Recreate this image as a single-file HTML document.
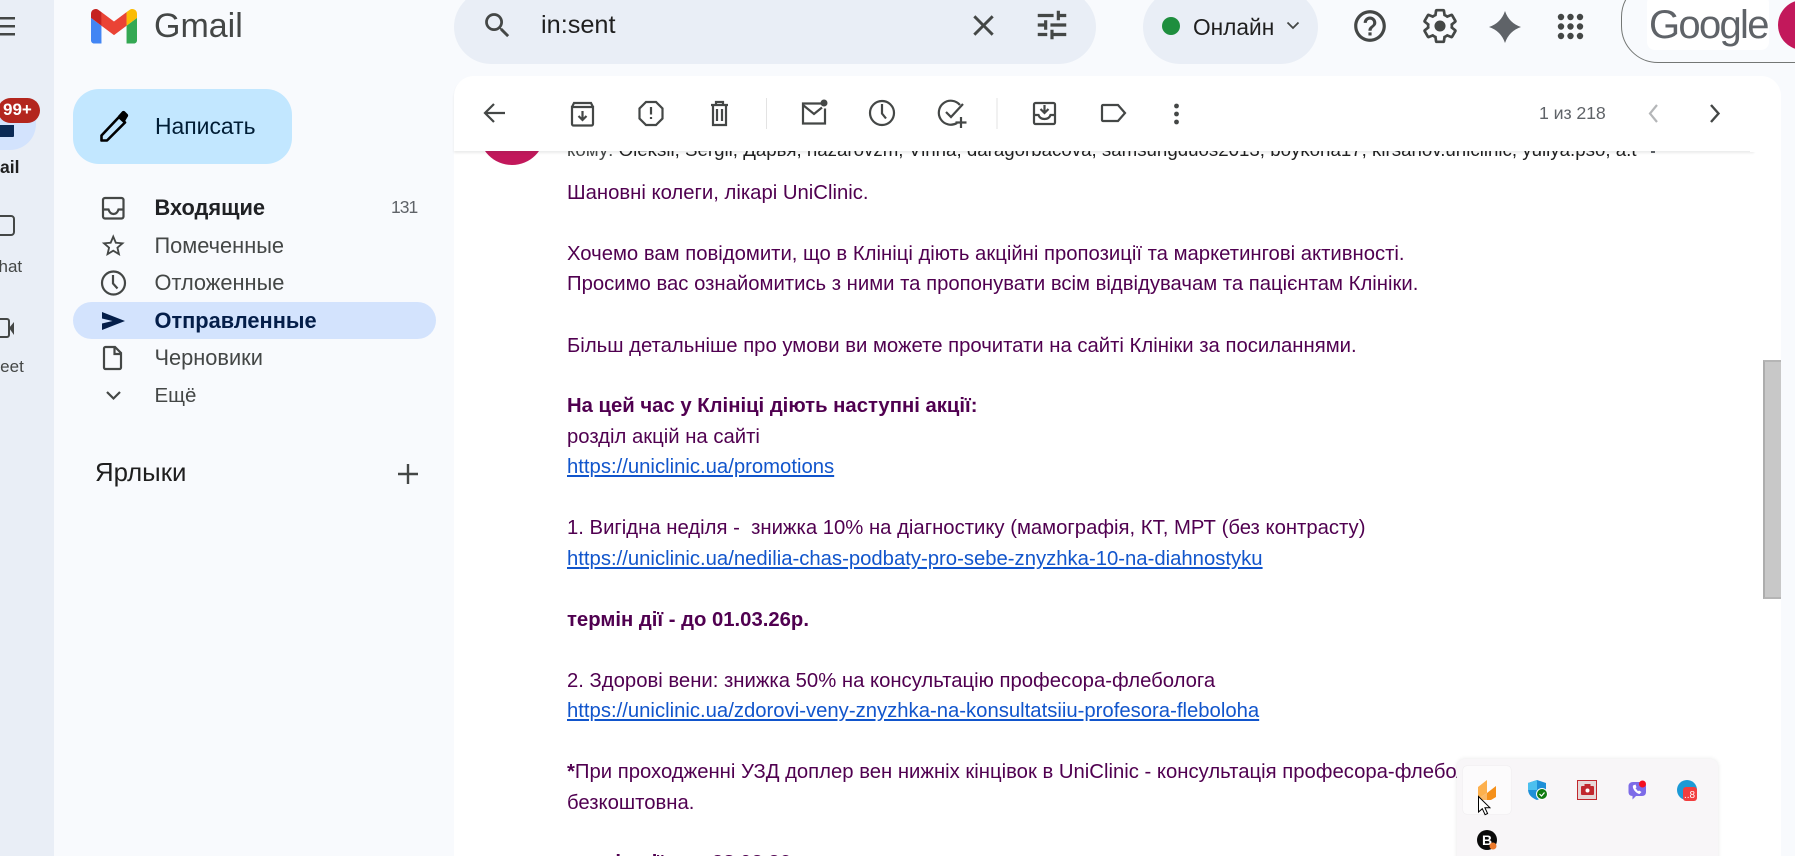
<!DOCTYPE html>
<html lang="uk"><head><meta charset="utf-8"><title>Gmail</title>
<style>
html,body{margin:0;padding:0;width:1795px;height:856px;overflow:hidden;background:#f8fafd}
body{position:relative;font-family:"Liberation Sans",Arial,sans-serif}
.a{position:absolute}
.t{position:absolute;white-space:nowrap;line-height:30px;height:30px}
svg{position:absolute;overflow:visible}
.n{font-size:21.8px;color:#444746;left:154.5px}
.l{position:absolute;left:567px;white-space:nowrap;font-size:20.3px;line-height:30px;height:30px;color:#500050}
.l a{color:#1155cc;text-decoration:underline}
b{font-weight:700}
.i{width:27.5px;height:27.5px;fill:#444746}
.s{fill:none;stroke:#444746;stroke-width:2.2}
</style></head><body>

<!-- left rail -->
<div class="a" style="left:0;top:0;width:54px;height:856px;background:#e9eef6"></div>
<svg style="left:0;top:0" width="54" height="400">
<g fill="#444746"><rect x="0" y="17" width="15" height="2.5"/><rect x="0" y="25" width="15" height="2.5"/><rect x="0" y="33" width="15" height="2.5"/></g>
<path d="M0 110h36v14a26 26 0 0 1-26 26H0z" fill="#d3e3fd"/>
<path d="M0 125h14v11a1 1 0 0 1-1 1H0z" fill="#0b2a55"/>
<path d="M0 216h11a3 3 0 0 1 3 3v13a3 3 0 0 1-3 3H0" fill="none" stroke="#444746" stroke-width="2"/>
<path d="M0 319h7a2 2 0 0 1 2 2v14a2 2 0 0 1-2 2H0" fill="none" stroke="#444746" stroke-width="2"/>
<path d="M9 328l5-6v13z" fill="#444746"/>
</svg>
<div class="a" style="left:-2px;top:98px;width:42px;height:25px;border-radius:13px;background:#b3261e"></div>
<div class="t" style="left:3px;top:95px;font-size:17px;font-weight:700;color:#fff">99+</div>
<div class="t" style="left:0;top:152px;font-size:17.5px;color:#1f1f1f;font-weight:700">ail</div>
<div class="t" style="left:-10px;top:252px;font-size:17px;color:#444746">chat</div>
<div class="t" style="left:-14px;top:352px;font-size:17px;color:#444746">Meet</div>

<!-- logo -->
<svg style="left:91px;top:9px" width="46" height="34.5" viewBox="52 42 88 66">
<path fill="#4285f4" d="M58 108h14V74L52 59v43c0 3.32 2.69 6 6 6"/>
<path fill="#34a853" d="M120 108h14c3.32 0 6-2.69 6-6V59l-20 15"/>
<path fill="#fbbc04" d="M120 48v26l20-15v-8c0-7.42-8.47-11.65-14.4-7.2"/>
<path fill="#ea4335" d="M72 74V48l24 18 24-18v26L96 92"/>
<path fill="#c5221f" d="M52 51v8l20 15V48l-5.6-4.2c-5.94-4.45-14.4-.22-14.4 7.2"/>
</svg>
<div class="t" style="left:154px;top:11px;font-size:34px;color:#444746">Gmail</div>

<!-- compose -->
<div class="a" style="left:73px;top:89px;width:219px;height:75px;border-radius:26px;background:#c2e7ff"></div>
<svg style="left:99px;top:110px" width="31" height="32" viewBox="0 0 31 32">
<path d="M2.500 25.500L20 7 26 12.500 8 30.500H2.500z" fill="none" stroke="#000" stroke-width="2.600" stroke-linejoin="round"/>
<path d="M19 6l4-4.500a2 2 0 0 1 3 0l2.500 2.500a2 2 0 0 1 0 3L25 13z" fill="#000"/>
</svg>
<div class="t" style="left:155px;top:110.500px;font-size:22.9px;color:#001d35">Написать</div>

<!-- nav -->
<div class="a" style="left:73px;top:302px;width:363px;height:37px;border-radius:19px;background:#d3e3fd"></div>
<div class="t n" style="top:193px;font-weight:700;color:#202124">Входящие</div>
<div class="t" style="left:391px;top:192px;font-size:17.5px;letter-spacing:-1px;color:#5f6368">131</div>
<div class="t n" style="top:231px">Помеченные</div>
<div class="t n" style="top:268px">Отложенные</div>
<div class="t n" style="top:306px;font-weight:700;color:#041e49">Отправленные</div>
<div class="t n" style="top:343px">Черновики</div>
<div class="t n" style="top:381px;font-size:20.5px">Ещё</div>
<svg style="left:0;top:0" width="160" height="420">
<rect x="103" y="198" width="20.500" height="20.500" rx="2" class="s"/>
<path d="M103 209.500h5.500c1 3 3 4.500 5 4.500s4-1.500 5-4.500h5" class="s"/>
<path transform="translate(99.500 232) scale(1.145)" fill="#444746" d="M22 9.24l-7.19-.62L12 2 9.19 8.630 2 9.240l5.460 4.730L5.820 21 12 17.270 18.180 21l-1.630-7.030L22 9.240zM12 15.400l-3.760 2.270 1-4.280-3.320-2.880 4.380-.38L12 6.100l1.710 4.040 4.380.38-3.320 2.880 1 4.280L12 15.400z"/>
<circle cx="113.500" cy="283" r="11.500" class="s"/><path d="M113 275v8.500l4.500 5" class="s"/>
<path d="M102 312l23 9-23 9v-6.500l10.500-2.500-10.500-2.500z" fill="#041e49"/>
<path d="M105.500 347h9.500l6 6v14.500a1.500 1.500 0 0 1-1.500 1.500h-14a1.500 1.500 0 0 1-1.500-1.500v-19a1.500 1.500 0 0 1 1.500-1.500zM114.500 347v7h6.500" class="s"/>
<path d="M107 392l6.500 6.500 6.500-6.500" class="s"/>
</svg>
<div class="t" style="left:95px;top:458px;font-size:25.800px;color:#1f1f1f">Ярлыки</div>
<svg style="left:396px;top:461px" width="24" height="24"><path d="M12 3v20M2 13h20" stroke="#444746" stroke-width="2.400" fill="none"/></svg>

<!-- search -->
<div class="a" style="left:454px;top:-10px;width:642px;height:74px;border-radius:37px;background:#e9eef6"></div>
<svg class="i" viewBox="0 0 24 24" style="left:481px;top:9px;width:33px;height:33px"><path d="M15.500 14h-.79l-.28-.27A6.471 6.471 0 0 0 16 9.500 6.500 6.500 0 1 0 9.500 16c1.610 0 3.090-.59 4.230-1.570l.27.28v.79l5 4.990L20.490 19l-4.990-5zm-6 0C7.010 14 5 11.990 5 9.500S7.010 5 9.500 5 14 7.010 14 9.500 11.990 14 9.500 14z"/></svg>
<div class="t" style="left:541px;top:10px;font-size:25.300px;color:#1f1f1f">in:sent</div>
<svg class="i" viewBox="0 0 24 24" style="left:966px;top:8px;width:35px;height:35px"><path d="M19 6.410L17.590 5 12 10.590 6.410 5 5 6.410 10.590 12 5 17.590 6.410 19 12 13.410 17.590 19 19 17.590 13.410 12z"/></svg>
<svg class="i" viewBox="0 0 24 24" style="left:1033px;top:6px;width:38px;height:38px"><path d="M3 17v2h6v-2H3zM3 5v2h10V5H3zm10 16v-2h8v-2h-8v-2h-2v6h2zM7 9v2H3v2h4v2h2V9H7zm14 4v-2H11v2h10zm-6-4h2V7h4V5h-4V3h-2v6z"/></svg>

<!-- status -->
<div class="a" style="left:1143px;top:-10px;width:175px;height:74px;border-radius:37px;background:#e9eef6"></div>
<div class="a" style="left:1162px;top:17px;width:18px;height:18px;border-radius:50%;background:#1e8e3e"></div>
<div class="t" style="left:1193px;top:12px;font-size:22.700px;color:#1f1f1f">Онлайн</div>
<svg style="left:1286px;top:21px" width="14" height="10"><path d="M1.500 1.500l5.500 5.500 5.500-5.500" fill="none" stroke="#444746" stroke-width="1.800"/></svg>

<!-- top icons -->
<svg class="i" viewBox="0 0 24 24" style="left:1351px;top:7px;width:38px;height:38px"><path d="M11 18h2v-2h-2v2zm1-16C6.480 2 2 6.480 2 12s4.480 10 10 10 10-4.480 10-10S17.520 2 12 2zm0 18c-4.410 0-8-3.590-8-8s3.590-8 8-8 8 3.590 8 8-3.590 8-8 8zm0-14c-2.210 0-4 1.790-4 4h2c0-1.100.9-2 2-2s2 .9 2 2c0 2-3 1.750-3 5h2c0-2.250 3-2.500 3-5 0-2.210-1.790-4-4-4z"/></svg>
<svg viewBox="0 0 24 24" style="left:1421px;top:7px;width:38px;height:38px"><path fill="none" stroke="#444746" stroke-width="1.700" d="M19.430 12.980c.04-.32.07-.64.07-.98s-.03-.66-.07-.98l2.110-1.650c.19-.15.24-.42.12-.64l-2-3.460c-.12-.22-.39-.3-.61-.22l-2.490 1c-.52-.4-1.080-.73-1.690-.98l-.38-2.650C14.460 2.180 14.250 2 14 2h-4c-.25 0-.46.18-.49.42l-.38 2.650c-.61.25-1.170.59-1.690.98l-2.490-1c-.23-.09-.49 0-.61.22l-2 3.460c-.13.22-.07.49.12.64l2.110 1.650c-.04.32-.07.65-.07.98s.03.66.07.98l-2.110 1.650c-.19.15-.24.42-.12.64l2 3.460c.12.22.39.3.61.22l2.490-1c.52.4 1.080.73 1.690.98l.38 2.650c.03.24.24.42.49.42h4c.25 0 .46-.18.49-.42l.38-2.650c.61-.25 1.170-.59 1.690-.98l2.490 1c.23.09.49 0 .61-.22l2-3.460c.12-.22.07-.49-.12-.64l-2.110-1.650z"/><circle cx="12" cy="12" r="3.500" fill="#444746"/></svg>
<svg viewBox="0 0 24 24" style="left:1489px;top:11px;width:32px;height:32px"><path fill="#5f6368" d="M12 0Q15 9 24 12Q15 15 12 24Q9 15 0 12Q9 9 12 0z"/></svg>
<svg style="left:1557px;top:13px" width="27" height="27"><g fill="#444746"><circle cx="4" cy="4" r="3.200"/><circle cx="13.500" cy="4" r="3.200"/><circle cx="23" cy="4" r="3.200"/><circle cx="4" cy="13.500" r="3.200"/><circle cx="13.500" cy="13.500" r="3.200"/><circle cx="23" cy="13.500" r="3.200"/><circle cx="4" cy="23" r="3.200"/><circle cx="13.500" cy="23" r="3.200"/><circle cx="23" cy="23" r="3.200"/></g></svg>

<!-- account -->
<div class="a" style="left:1621px;top:-20px;width:240px;height:83px;border-radius:37px;border:1px solid #747775;box-sizing:border-box"></div>
<div class="a" style="left:1647px;top:-5px;width:122px;height:55px;border-radius:8px;background:#fff"></div>
<div class="t" style="left:1649px;top:10px;font-size:40px;color:#5f6368;letter-spacing:-1.700px">Google</div>
<div class="a" style="left:1778px;top:0;width:50px;height:50px;border-radius:50%;background:#c2185b"></div>

<!-- card -->
<div class="a" style="left:454px;top:76px;width:1327px;height:800px;border-radius:20px;background:#fff"></div>

<!-- header fragment under toolbar -->
<div class="a" style="left:479px;top:99px;width:66px;height:66px;border-radius:50%;background:#c2185b"></div>
<div class="t" style="left:567px;top:135px;font-size:18.700px;color:#444746">кому: <span style="color:#1f1f1f">Oleksii, Sergii, Дарья, nazarovzm, Vlnna, daragorbacova, samsungduos2013, boykona17, kirsanov.uniclinic, yuliya.pso, a.t</span></div>
<div class="a" style="left:1651px;top:150px;width:4px;height:3px;background:#5f6368"></div>

<!-- toolbar -->
<div class="a" style="left:454px;top:76px;width:1300px;height:75px;background:#fff;border-radius:20px 0 0 0;box-shadow:0 2px 2px rgba(60,64,67,.1)"></div>
<div class="a" style="left:1750px;top:76px;width:31px;height:76px;background:#fff;border-radius:0 20px 0 0"></div>
<svg style="left:0;top:0" width="1795" height="160" fill="none" stroke="#444746" stroke-width="2.200">
<path d="M505 113h-19M494 104l-9 9 9 9"/>
<path d="M572 107h21v17a1.500 1.500 0 0 1-1.500 1.500h-18a1.500 1.500 0 0 1-1.500-1.500zM572 107l2-4h17l2 4" />
<path d="M582.500 111v8M578.500 116l4 4 4-4"/>
<path d="M646 102h10l6.500 6.500v10l-6.500 6.500h-10l-6.500-6.500v-10z"/><path d="M651 107v7.500M651 117v2"/>
<path d="M711 105h17M716 104v-2h7v2M713 105v20h13v-20M717 109v12M722 109v12"/>
<path d="M766.500 98v31" stroke="#e3e3e3" stroke-width="1"/>
<path d="M821 103.500h-18v20h22v-15"/><path d="M803 105l11 9 8-6.500"/><circle cx="824" cy="103" r="3.500" fill="#444746" stroke="none"/>
<circle cx="882" cy="113" r="12"/><path d="M882 104v9.500l4 5"/>
<path d="M960 105a12 12 0 1 0-3 18M946 112l5 5 12-13M961 117v11M955.500 122.500h11"/>
<path d="M997 98v31" stroke="#e3e3e3" stroke-width="1"/>
<rect x="1034" y="103" width="21" height="21" rx="1.500"/><path d="M1034 115h4.500c1 3 3.500 4 6 4s5-1 6-4h4.500M1044.500 105v7M1040.500 109l4 4 4-4"/>
<path d="M1103 105h15l7 8-7 8h-15a1 1 0 0 1-1-1v-14a1 1 0 0 1 1-1z"/>
<path d="M1657 105l-7 8.500 7 8.500" stroke="#b4b6b8"/>
<path d="M1711 105l7.500 8.500-7.500 8.500" stroke-width="2.400"/>
</svg>
<svg style="left:1172px;top:103px" width="9" height="24"><g fill="#444746"><circle cx="4.500" cy="3" r="2.400"/><circle cx="4.500" cy="11" r="2.400"/><circle cx="4.500" cy="19" r="2.400"/></g></svg>
<div class="t" style="left:1539px;top:98px;font-size:17.800px;color:#5f6368;letter-spacing:-.1px">1 из 218</div>

<!-- body -->
<div class="l" style="top:178px">Шановні колеги, лікарі UniClinic.</div>
<div class="l" style="top:239px">Хочемо вам повідомити, що в Клініці діють акційні пропозиції та маркетингові активності.</div>
<div class="l" style="top:269px">Просимо вас ознайомитись з ними та пропонувати всім відвідувачам та пацієнтам Клініки.</div>
<div class="l" style="top:331px">Більш детальніше про умови ви можете прочитати на сайті Клініки за посиланнями.</div>
<div class="l" style="top:391px"><b>На цей час у Клініці діють наступні акції:</b></div>
<div class="l" style="top:422px">розділ акцій на сайті</div>
<div class="l" style="top:452px"><a>https://uniclinic.ua/promotions</a></div>
<div class="l" style="top:513px">1. Вигідна неділя -&nbsp; знижка 10% на діагностику (мамографія, КТ, МРТ (без контрасту)</div>
<div class="l" style="top:544px"><a>https://uniclinic.ua/nedilia-chas-podbaty-pro-sebe-znyzhka-10-na-diahnostyku</a></div>
<div class="l" style="top:605px"><b>термін дії - до 01.03.26р.</b></div>
<div class="l" style="top:666px">2. Здорові вени: знижка 50% на консультацію професора-флеболога</div>
<div class="l" style="top:696px"><a>https://uniclinic.ua/zdorovi-veny-znyzhka-na-konsultatsiiu-profesora-fleboloha</a></div>
<div class="l" style="top:757px"><b>*</b>При проходженні УЗД доплер вен нижніх кінцівок в UniClinic - консультація професора-флеболога</div>
<div class="l" style="top:788px">безкоштовна.</div>
<div class="l" style="top:848px"><b>термін дії - до 28.02.26р.</b></div>

<!-- scrollbar -->
<div class="a" style="left:1763px;top:360px;width:18px;height:239px;background:#c8c8c8;border-left:2px solid #adadad;border-top:2px solid #b5b5b5;border-bottom:2px solid #b5b5b5;box-sizing:border-box"></div>

<!-- tray popup -->
<div class="a" style="left:1457px;top:759px;width:261px;height:110px;border-radius:8px;background:#f8f6f8;box-shadow:0 0 5px rgba(0,0,0,.1)"></div>
<div class="a" style="left:1463px;top:766px;width:48px;height:48px;border-radius:4px;background:#fcfbfc;box-shadow:0 0 1px rgba(0,0,0,.12)"></div>
<svg style="left:0;top:0" width="1795" height="856">
<path d="M1478 787l9-7v13l-9 6z" fill="#fdb04d"/>
<path d="M1487 793l9-7v11l-5 3h-4z" fill="#f5901a"/>
<path d="M1478 799l9-6v7h-9z" fill="#fbb866"/>
<path d="M1537 780l9 3v6c0 6-4 9-9 11-5-2-9-5-9-11v-6z" fill="#1e90d8"/><path d="M1537 780v10h-9v-7z" fill="#4cc0ee"/><circle cx="1542" cy="794" r="6" fill="#fff"/><circle cx="1542" cy="794" r="5" fill="#107c10"/><path d="M1539.500 794l2 2 3-3.500" stroke="#fff" stroke-width="1.200" fill="none"/>
<rect x="1577.500" y="780.500" width="19" height="19" fill="#e6d8d8" stroke="#c1272d"/><rect x="1581" y="786" width="13" height="9" rx="1" fill="#c1272d"/><rect x="1584.500" y="784" width="6" height="3" fill="#c1272d"/><circle cx="1587.500" cy="790.500" r="2" fill="#fff"/>
<path d="M1633 782h9c2.500 0 4 1.500 4 4v6c0 2.500-1.500 4-4 4h-6l-3.500 3.500v-3.500c-2.500 0-4-1.500-4-4v-6c0-2.500 2-4 4.500-4z" fill="#7d6be8"/><path d="M1633 785.500c-1 3 3 8 6.500 8.500l2-2-2.500-1.500-1 .8-2.500-3 1-1-1-2.800z" fill="#fff"/><circle cx="1642.500" cy="784" r="3.500" fill="#f40f1f"/>
<circle cx="1687" cy="790" r="10" fill="#1c9ad6"/><rect x="1683" y="787" width="14" height="14" rx="3" fill="#f23e3e"/><text x="1684" y="798" font-size="10" fill="#fff" font-family="Liberation Sans">..8</text>
<circle cx="1487" cy="840" r="10" fill="#0a0a0a"/><text x="1482" y="845" font-size="14" font-weight="700" fill="#fff" font-family="Liberation Sans">B</text><circle cx="1493" cy="846" r="3.500" fill="#ec7a2c"/>
<path d="M1478.500 796.500v15.500l3.800-3.300 2.800 6 2.500-1.200-2.700-5.800h5z" fill="#fff" stroke="#000" stroke-width="1"/>
</svg>
</body></html>
